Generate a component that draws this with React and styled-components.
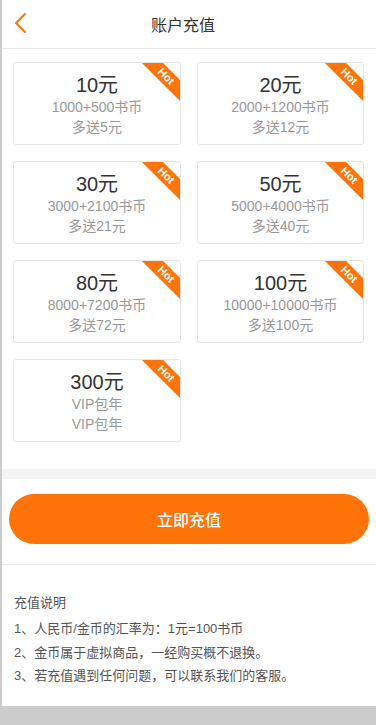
import styled, { createGlobalStyle } from "styled-components";

const GlobalStyle = createGlobalStyle`
  html, body {
    margin: 0;
    padding: 0;
    background: #cccccc;
  }
  body {
    font-family: "Liberation Sans", "Noto Sans CJK SC", sans-serif;
  }
  #root {
    padding-left: 2px;
  }
`;

const packages = [
  { price: "10元", coins: "1000+500书币", gift: "多送5元" },
  { price: "20元", coins: "2000+1200书币", gift: "多送12元" },
  { price: "30元", coins: "3000+2100书币", gift: "多送21元" },
  { price: "50元", coins: "5000+4000书币", gift: "多送40元" },
  { price: "80元", coins: "8000+7200书币", gift: "多送72元" },
  { price: "100元", coins: "10000+10000书币", gift: "多送100元" },
  { price: "300元", coins: "VIP包年", gift: "VIP包年" },
];

const notes = [
  "1、人民币/金币的汇率为：1元=100书币",
  "2、金币属于虚拟商品，一经购买概不退换。",
  "3、若充值遇到任何问题，可以联系我们的客服。",
];

const Page = styled.div`
  background: #ffffff;
  width: 374px;
  min-height: 706px;
`;

const Header = styled.div`
  position: relative;
  height: 48px;
  display: flex;
  align-items: center;
  justify-content: center;
  border-bottom: 1px solid #e8e8e8;
`;

const Back = styled.span`
  position: absolute;
  left: 11px;
  top: 12px;
  display: flex;
`;

const Title = styled.h1`
  margin: 0 0 0 -12px;
  font-size: 16px;
  font-weight: 400;
  color: #333333;
  font-family: "Noto Sans CJK SC", sans-serif;
`;

const Grid = styled.div`
  display: grid;
  grid-template-columns: 168px 167px;
  column-gap: 16px;
  row-gap: 16px;
  padding: 13px 11px 27px 11px;
`;

const Card = styled.div`
  position: relative;
  overflow: hidden;
  height: 83px;
  box-sizing: border-box;
  border: 1px solid #e6e6e6;
  border-radius: 3px;
  display: flex;
  flex-direction: column;
  align-items: center;
  padding-top: 10px;
`;

const Price = styled.div`
  font-size: 20px;
  color: #333333;
  line-height: 24px;
`;

const Sub = styled.div`
  font-size: 14px;
  color: #999999;
  line-height: 20px;
`;

const Ribbon = styled.div`
  position: absolute;
  width: 64px;
  height: 15px;
  line-height: 15px;
  top: 6px;
  right: -18px;
  transform: rotate(45deg);
  background: #ff7409;
  color: #ffffff;
  font-size: 11px;
  font-weight: 700;
  text-align: center;
  font-family: "Liberation Sans", sans-serif;
`;

const Band = styled.div`
  height: 10px;
  background: #f4f4f4;
`;

const ButtonWrap = styled.div`
  padding: 15px 7px 20px 7px;
  border-bottom: 1px solid #ececec;
`;

const Button = styled.button`
  display: block;
  width: 100%;
  height: 50px;
  border: none;
  border-radius: 25px;
  background: #ff7409;
  color: #ffffff;
  font-size: 16px;
  font-family: "Noto Sans CJK SC", sans-serif;
  font-weight: 500;
`;

const Notes = styled.div`
  padding: 28px 12px 0 12px;
  color: #555555;
  font-size: 13px;
`;

const NoteTitle = styled.div`
  line-height: 20px;
  margin-bottom: 4px;
`;

const NoteLine = styled.div`
  line-height: 23.5px;
`;

const ChevronLeft = () => (
  <svg width="14" height="22" viewBox="0 0 14 22" fill="none">
    <path d="M12 2 L3 11 L12 20" stroke="#ff7409" strokeWidth="2" strokeLinecap="round" strokeLinejoin="round" />
  </svg>
);

export default function App() {
  return (
    <>
      <GlobalStyle />
      <Page>
        <Header>
          <Back>
            <ChevronLeft />
          </Back>
          <Title>账户充值</Title>
        </Header>
        <Grid>
          {packages.map((p) => (
            <Card key={p.price}>
              <Ribbon>Hot</Ribbon>
              <Price>{p.price}</Price>
              <Sub>{p.coins}</Sub>
              <Sub>{p.gift}</Sub>
            </Card>
          ))}
        </Grid>
        <Band />
        <ButtonWrap>
          <Button>立即充值</Button>
        </ButtonWrap>
        <Notes>
          <NoteTitle>充值说明</NoteTitle>
          {notes.map((n) => (
            <NoteLine key={n}>{n}</NoteLine>
          ))}
        </Notes>
      </Page>
    </>
  );
}
